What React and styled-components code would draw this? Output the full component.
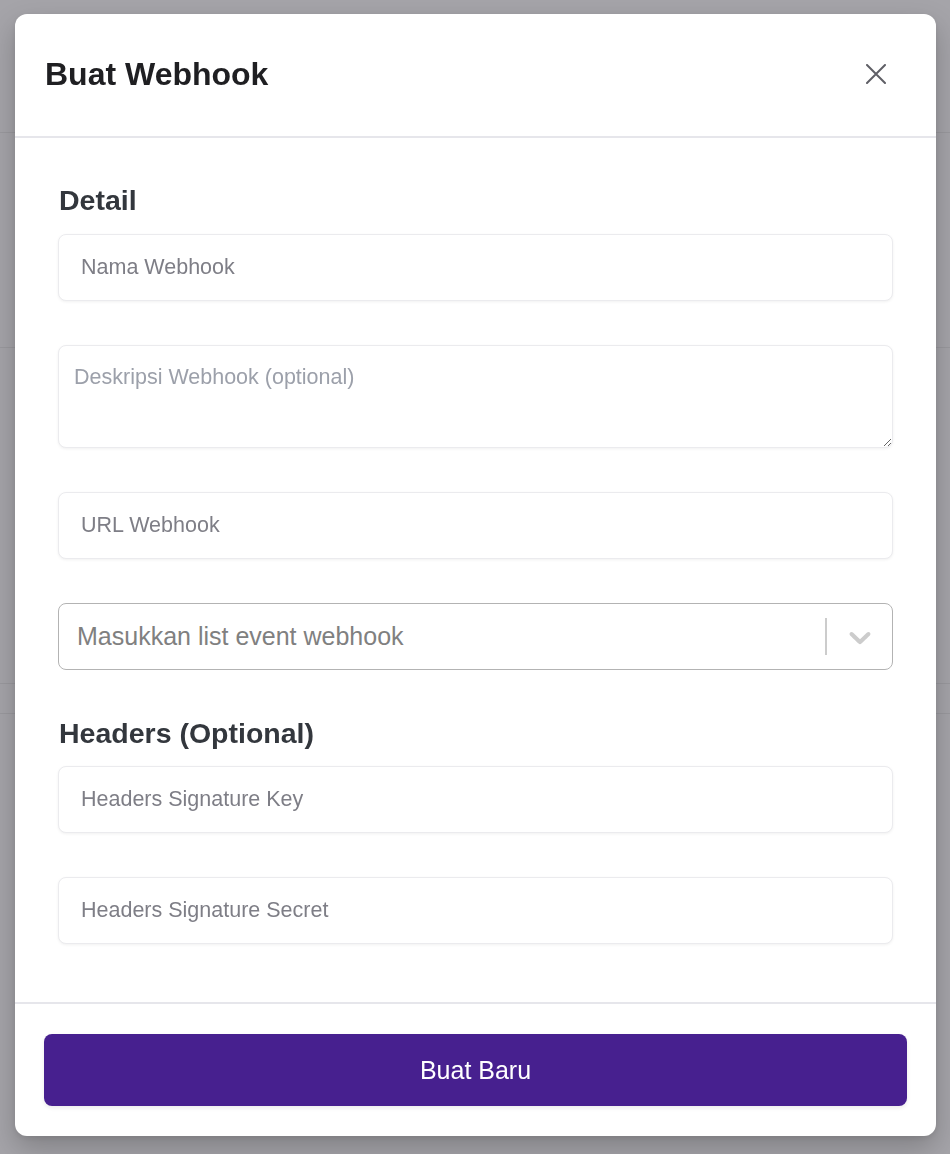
import React from "react";
import styled, { createGlobalStyle } from "styled-components";

const Global = createGlobalStyle`
  * { box-sizing: border-box; }
  html, body { margin: 0; padding: 0; }
  body {
    font-family: "Liberation Sans", Arial, sans-serif;
    background: #a5a4a9;
    width: 950px;
    height: 1154px;
    overflow: hidden;
  }
`;

const Page = styled.div`
  width: 950px;
  height: 1154px;
  display: flex;
  flex-direction: column;
  background: #a5a4a9;
`;

const PageRow = styled.div`
  height: ${(p) => p.$h}px;
  flex: none;
  border-bottom: 1px solid #9a999e;
`;

const Overlay = styled.div`
  position: fixed;
  inset: 0;
  padding: 14px 14px 0 15px;
  display: flex;
  align-items: flex-start;
`;

const Modal = styled.div`
  width: 921px;
  background: #ffffff;
  border-radius: 12px;
  box-shadow: 0 12px 28px rgba(0, 0, 0, 0.22), 0 2px 6px rgba(0, 0, 0, 0.08);
  display: flex;
  flex-direction: column;
  overflow: hidden;
`;

const Header = styled.div`
  height: 124px;
  display: flex;
  align-items: center;
  justify-content: space-between;
  padding: 0 40px 2px 30px;
  border-bottom: 2px solid #e6e6eb;
`;

const Title = styled.h2`
  margin: 0;
  font-size: 32px;
  font-weight: 700;
  color: #1f1f22;
  line-height: 1;
`;

const CloseButton = styled.button`
  width: 40px;
  height: 40px;
  border: none;
  background: transparent;
  padding: 0;
  display: flex;
  align-items: center;
  justify-content: center;
  cursor: pointer;
  color: #5f5f66;
`;

const Body = styled.div`
  padding: 46px 43px 58px;
  display: flex;
  flex-direction: column;
`;

const SectionTitle = styled.h3`
  margin: ${(p) => p.$top || 0}px 0 ${(p) => p.$bottom || 18}px;
  padding-left: 1px;
  font-size: 28.5px;
  line-height: 32px;
  font-weight: 700;
  color: #33373d;
`;

const Fields = styled.div`
  display: flex;
  flex-direction: column;
  gap: 44px;
`;

const TextInput = styled.input`
  height: 67px;
  width: 100%;
  border: 1px solid #ebebee;
  border-radius: 8px;
  box-shadow: 0 1px 3px rgba(0, 0, 0, 0.06);
  padding: 0 20px 0 22px;
  font-family: inherit;
  font-size: 21.5px;
  color: #222;
  background: #fff;
  outline: none;
  &::placeholder {
    color: #7e7e86;
  }
`;

const TextArea = styled.textarea`
  height: 103px;
  width: 100%;
  border: 1px solid #ebebee;
  border-radius: 8px;
  box-shadow: 0 1px 3px rgba(0, 0, 0, 0.06);
  padding: 15px 15px;
  font-family: inherit;
  font-size: 21.5px;
  line-height: 1.5;
  color: #222;
  background: #fff;
  outline: none;
  display: block;
  resize: vertical;
  &::placeholder {
    color: #9ca0aa;
  }
`;

const SelectControl = styled.div`
  height: 67px;
  border: 1px solid #b3b3b3;
  border-radius: 8px;
  display: flex;
  align-items: center;
  background: #fff;
`;

const SelectValue = styled.div`
  flex: 1;
  padding-left: 18px;
  font-size: 25px;
  color: #808080;
`;

const Separator = styled.span`
  align-self: stretch;
  width: 2px;
  margin: 14px 0;
  background: #cccccc;
`;

const Indicator = styled.div`
  padding: 0 14px 0 15px;
  display: flex;
  align-items: center;
  color: #cccccc;
`;

const Footer = styled.div`
  border-top: 2px solid #e6e6eb;
  padding: 30px 29px 30px;
`;

const PrimaryButton = styled.button`
  width: 100%;
  height: 72px;
  border: none;
  border-radius: 8px;
  background: #47208f;
  color: #ffffff;
  font-family: inherit;
  font-size: 25px;
  box-shadow: 0 2px 4px rgba(0, 0, 0, 0.08);
  cursor: pointer;
`;

export default function App() {
  return (
    <>
      <Global />
      <Page>
        <PageRow $h={133} />
        <PageRow $h={215} />
        <PageRow $h={336} />
        <PageRow $h={30} />
      </Page>
      <Overlay>
        <Modal>
          <Header>
            <Title>Buat Webhook</Title>
            <CloseButton aria-label="Tutup">
              <svg width="20" height="20" viewBox="0 0 20 20" fill="none">
                <path d="M1 1L19 19M19 1L1 19" stroke="currentColor" strokeWidth="2" strokeLinecap="round" />
              </svg>
            </CloseButton>
          </Header>
          <Body>
            <SectionTitle>Detail</SectionTitle>
            <Fields>
              <TextInput placeholder="Nama Webhook" />
              <TextArea placeholder="Deskripsi Webhook (optional)" />
              <TextInput placeholder="URL Webhook" />
              <SelectControl>
                <SelectValue>Masukkan list event webhook</SelectValue>
                <Separator />
                <Indicator>
                  <svg width="36" height="36" viewBox="0 0 20 20" fill="currentColor">
                    <path d="M4.516 7.548c0.436-0.446 1.043-0.481 1.576 0l3.908 3.747 3.908-3.747c0.533-0.481 1.141-0.446 1.574 0 0.436 0.445 0.408 1.197 0 1.615-0.406 0.418-4.695 4.502-4.695 4.502-0.217 0.223-0.502 0.335-0.787 0.335s-0.57-0.112-0.789-0.335c0 0-4.287-4.084-4.695-4.502s-0.436-1.170 0-1.615z" />
                  </svg>
                </Indicator>
              </SelectControl>
            </Fields>
            <SectionTitle $top={47} $bottom={17}>Headers (Optional)</SectionTitle>
            <Fields>
              <TextInput placeholder="Headers Signature Key" />
              <TextInput placeholder="Headers Signature Secret" />
            </Fields>
          </Body>
          <Footer>
            <PrimaryButton>Buat Baru</PrimaryButton>
          </Footer>
        </Modal>
      </Overlay>
    </>
  );
}
